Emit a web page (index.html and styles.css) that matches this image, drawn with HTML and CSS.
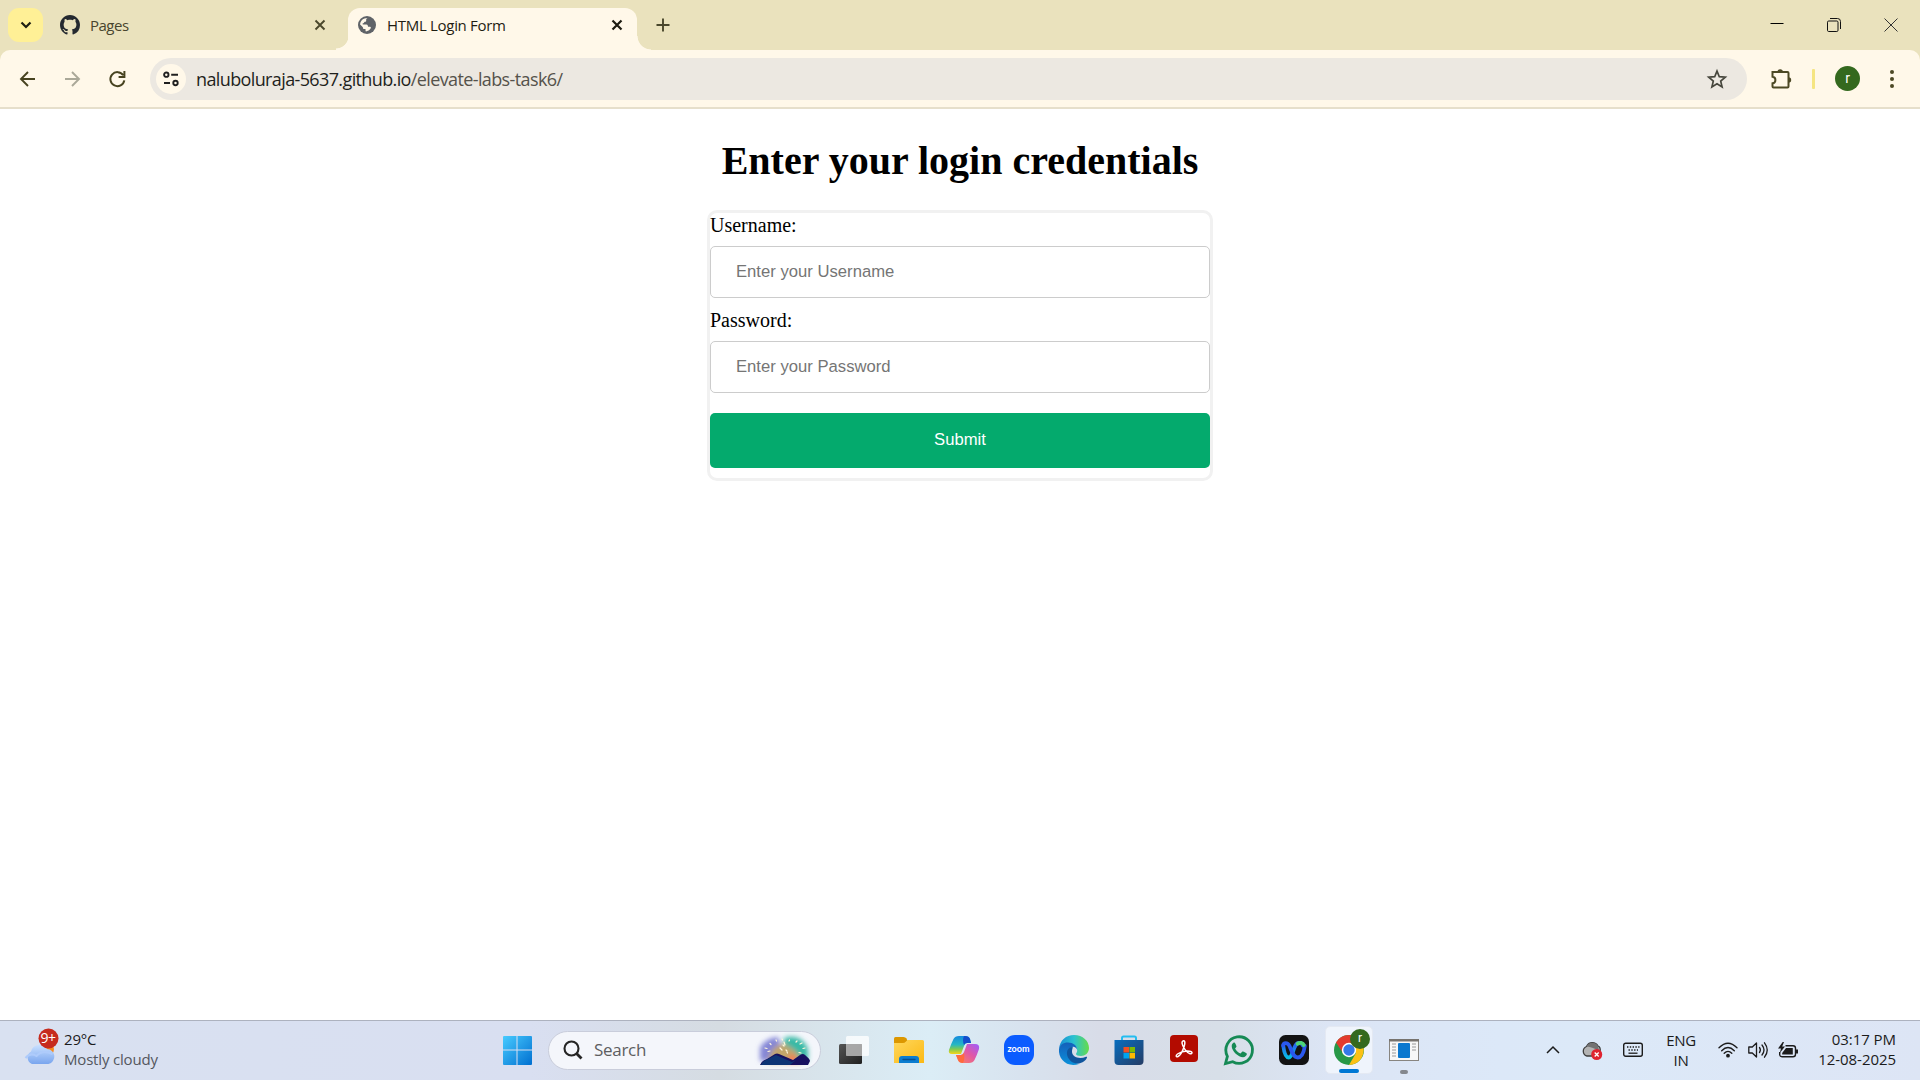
FILE: index.html
```html
<!DOCTYPE html>
<html lang="en">
<head>
<meta charset="utf-8">
<title>HTML Login Form</title>
<link rel="stylesheet" href="styles.css">
</head>
<body>
<div class="tabstrip">
  <div class="tab-search"><svg width="12" height="8" viewBox="0 0 12 8"><path d="M1.500 1.500 6 6l4.500-4.500" fill="none" stroke="#1f1f12" stroke-width="2.200"/></svg></div>
  <div class="tab">
    <svg width="20" height="20" viewBox="0 0 16 16"><path fill="#24292f" d="M8 0C3.580 0 0 3.580 0 8c0 3.540 2.290 6.530 5.470 7.590.4.070.55-.17.55-.38 0-.19-.01-.82-.01-1.490-2.010.37-2.530-.49-2.690-.94-.09-.23-.48-.94-.82-1.130-.28-.15-.68-.52-.01-.53.63-.01 1.080.58 1.230.82.72 1.210 1.870.87 2.330.66.070-.52.280-.87.510-1.070-1.780-.2-3.640-.89-3.640-3.950 0-.87.31-1.590.82-2.150-.08-.2-.36-1.020.08-2.120 0 0 .67-.21 2.200.82.64-.18 1.320-.27 2-.27s1.360.09 2 .27c1.530-1.040 2.200-.82 2.200-.82.44 1.100.16 1.920.08 2.120.51.56.82 1.270.82 2.150 0 3.070-1.870 3.750-3.650 3.950.29.25.54.73.54 1.480 0 1.070-.01 1.930-.01 2.200 0 .21.15.46.55.38A8.010 8.010 0 0 0 16 8c0-4.420-3.580-8-8-8z"/></svg>
    <span class="tab-title pages">Pages</span>
    <svg width="12" height="12" viewBox="0 0 12 12"><path d="m1.500 1.500 9 9m0-9-9 9" stroke="#4a472c" stroke-width="1.900"/></svg>
  </div>
  <div class="flare left"></div>
  <div class="tab active">
    <svg width="18" height="18" viewBox="0 0 18 18"><circle cx="9" cy="9" r="9" fill="#5f6368"/><path fill="#fff8e9" d="M9.500 2c-1 .8-1.600 1.300-1.300 2.400.2.900-.4 1.200-1.300 1.300-.9.100-.6 1.400-1.700 1.500-.8.100-.8.900-.2 1.300h3.400c1.500.1 1.600 1.500 1.600 2.300h2c1.200.1 1 1.300.4 2-1 1.400-2.300 2.300-4.500 2.600-.8-.7.100-1.900-.6-2.300H5.600c-.7-.300-.4-1.900-1.200-2.400L2.100 8.400C2.300 4.800 5.200 2 9.500 2z"/></svg>
    <span class="tab-title login">HTML Login Form</span>
    <svg width="12" height="12" viewBox="0 0 12 12"><path d="m1.500 1.500 9 9m0-9-9 9" stroke="#1d1b10" stroke-width="2.200"/></svg>
  </div>
  <div class="flare right"></div>
  <svg class="plus" width="14" height="14" viewBox="0 0 14 14"><path d="M7 .5v13M.5 7h13" stroke="#4a472c" stroke-width="1.900"/></svg>
  <div class="window-controls">
    <svg width="14" height="14" viewBox="0 0 14 14"><path d="M.5 5.500h13" stroke="#000"/></svg>
    <svg width="14" height="14" viewBox="0 0 14 14" fill="none" stroke="#111"><rect x=".5" y="3" width="10.500" height="10.500" rx="1.200"/><path d="M3 .5h7.500q3 0 3 3V11"/></svg>
    <svg width="14" height="14" viewBox="0 0 14 14"><path d="m.5.500 13 13m0-13-13 13" stroke="#333"/></svg>
  </div>
</div>
<div class="toolbar-wrap">
  <div class="toolbar">
    <div class="nav">
      <svg width="16" height="16" viewBox="0 0 16 16" fill="none" stroke="#47431f" stroke-width="1.900"><path d="M15 8H1.500M8 1 1 8l7 7"/></svg>
      <svg width="16" height="16" viewBox="0 0 16 16" fill="none" stroke="#aaa898" stroke-width="1.900"><path d="M0 8h14M7 1l7 7-7 7"/></svg>
      <svg width="16" height="16" viewBox="0 0 16 16" fill="none" stroke="#47431f" stroke-width="2"><path d="M13.200 4.200A7 7 0 1 0 14.300 9.300M14.400 0v5.900H8.600"/></svg>
    </div>
    <div class="omnibox">
      <div class="site-info"><svg width="16" height="16" viewBox="0 0 16 16" fill="none" stroke="#1f1f1f" stroke-width="1.900"><circle cx="3.300" cy="3.700" r="2.200"/><path d="M8.200 3.700H15M1 12h6"/><circle cx="12.500" cy="12" r="2.200"/></svg></div>
      <span class="url"><span class="host">naluboluraja-5637.github.io</span>/elevate-labs-task6/</span>
      <svg class="star" width="20" height="20" viewBox="0 0 20 20"><path d="m10 2.100 2.300 5.600 6 .5-4.600 3.900 1.400 5.900-5.100-3.200L4.900 18l1.400-5.900-4.600-3.900 6-.5z" fill="none" stroke="#46463c" stroke-width="1.700"/></svg>
    </div>
    <svg class="ext" width="22" height="22" viewBox="0 0 22 22"><path d="M2.500 4h15q1 0 1 1v13.500q0 1-1 1h-14q-1 0-1-1v-3.200q2.900-.3 2.900-3.300T2.500 8.700z" fill="none" stroke="#4c4925" stroke-width="2"/><path d="M7.500 4a2.700 2.700 0 0 1 5.400 0zM18.500 9.200a2.700 2.700 0 0 1 0 5.400z" fill="#4c4925"/></svg>
    <div class="divider"></div>
    <div class="avatar">r</div>
    <svg class="dots" width="4" height="18" viewBox="0 0 4 18" fill="#4c4925"><circle cx="2" cy="2" r="2"/><circle cx="2" cy="9" r="2"/><circle cx="2" cy="16" r="2"/></svg>
  </div>
</div>
<main class="page">
  <h1>Enter your login credentials</h1>
  <form class="login-form">
    <label for="user">Username:</label>
    <input id="user" type="text" placeholder="Enter your Username">
    <label for="pass">Password:</label>
    <input id="pass" type="password" placeholder="Enter your Password">
    <button type="button">Submit</button>
  </form>
</main>
<footer class="taskbar">
  <div class="weather">
    <div class="weather-icon">
      <svg width="36" height="40" viewBox="0 0 36 40"><defs><linearGradient id="cl" x2="0" y2="1"><stop stop-color="#c9e0ff"/><stop offset="1" stop-color="#79a5ee"/></linearGradient></defs><circle cx="23" cy="20" r="7" fill="#f78b1e"/><path d="M8 35a7 7 0 0 1-1-12.500A8.800 8.800 0 0 1 23 20a7.600 7.600 0 0 1 1.500 15z" fill="url(#cl)"/><path d="M1.500 29q5-6 11-2 6-7 16-2" fill="none" stroke="#aecbfb" stroke-width="2"/><circle cx="24.500" cy="9.500" r="10" fill="#c62b1e"/></svg>
      <span class="badge">9+</span>
    </div>
    <div class="weather-text"><span class="temp">29°C</span><span class="sky">Mostly cloudy</span></div>
  </div>
  <svg class="start" width="30" height="30" viewBox="0 0 30 30"><defs><linearGradient id="wn" x2="1" y2="1"><stop stop-color="#48cbff"/><stop offset="1" stop-color="#006fd0"/></linearGradient></defs><path fill="url(#wn)" d="M2 1h12.500v13.500H1V2Q1 1 2 1zM15.500 1H29q1 0 1 1v12.500H15.500zM1 15.500h13.500V30H2q-1 0-1-1zM15.500 15.500H30V29q0 1-1 1H15.500z"/></svg>
  <div class="search">
    <svg width="20" height="20" viewBox="0 0 20 20" fill="none" stroke="#252525" stroke-width="2.100"><circle cx="8.500" cy="8.500" r="7"/><path d="m13.500 13.500 5 5" stroke-width="2.800"/></svg>
    <span>Search</span>
    <svg class="scene" width="54" height="34" viewBox="0 0 54 34"><defs><filter id="soft" x="-30%" y="-30%" width="160%" height="160%"><feGaussianBlur stdDeviation="2.400"/></filter></defs><g filter="url(#soft)"><path d="M2 28V15Q7 5 20 4l8 24z" fill="#8486d6"/><path d="M26 27V5q17-5 24 11v12z" fill="#38b9a6"/><path d="M10 30q2-17 15-19 15 5 20 19z" fill="#c3a66a"/><path d="M29 30l5-10 6 10z" fill="#ff7150"/></g><g stroke="#fff6dc" stroke-width="1.200" stroke-linecap="round"><path d="m18 7 .5 1M24 6l.5 1m7 0-.5 1m8 0-1 1m6 1-2 1m5 4-2 .5m-4 4 2 .5M7 15l2 .5m3-5 1 1m-3 7 2-.5m13-6 1 1m-4 2 1 1m5 1 1 1m-3-9 1 3m-4 4 1 1m5 2 .5 1"/></g><path d="M2 32q1-4 7-6l8-5q2-1 4 0l14 6 7-5q3-2 5 0 5 4 5 6l-2 4z" fill="#17105f"/><path d="M3 32q1-4 7-6l8-4 16 7 4-2-6 5z" fill="#0d3475"/></svg>
  </div>
  <div class="apps">
    <div class="app"><svg width="30" height="30" viewBox="0 0 30 30"><defs><linearGradient id="tv" x2="1" y2="1"><stop stop-color="#555"/><stop offset="1" stop-color="#202020"/></linearGradient></defs><rect y="9" width="23" height="20" rx="1.500" fill="url(#tv)"/><rect x="7" y="1" width="23" height="20" rx="1.500" fill="#fff" opacity=".77"/><path d="M7 9h16v12H7z" fill="#949494" opacity=".7"/></svg></div>
    <div class="app"><svg width="30" height="30" viewBox="0 0 30 30"><defs><linearGradient id="fo" x2="1" y2="1"><stop stop-color="#ffd75c"/><stop offset="1" stop-color="#fbb914"/></linearGradient></defs><path d="M0 8V3.500Q0 2 1.500 2h8q2 0 3 1.500L13.500 6l-3 3z" fill="#dc9700"/><path d="M0 8h9q1.500 0 3-1.500L13.500 5H28.500q1.500 0 1.500 1.500V28H0z" fill="url(#fo)"/><path d="M5 28v-4q0-3 3-3h14q3 0 3 3v4z" fill="#0c7dd0"/><path d="M9 24.500h12" stroke="#074f91" stroke-width="1.300" stroke-linecap="round"/></svg></div>
    <div class="app"><svg width="30" height="30" viewBox="0 0 30 30"><defs><linearGradient id="c1" x2="0" y2="1"><stop stop-color="#158ade"/><stop offset=".48" stop-color="#25b7c4"/><stop offset=".72" stop-color="#79c957"/><stop offset="1" stop-color="#f5d517"/></linearGradient><linearGradient id="c2" x1="1" x2="0" y2="1"><stop stop-color="#9c5cff"/><stop offset=".45" stop-color="#e058a6"/><stop offset="1" stop-color="#ff8757"/></linearGradient></defs><path d="M16 1q4 0 5 3l1 4h-4q-2 0-3 3l-3 8H3Q-1 19 0 15q2-6 4.500-11Q6 1 10 1z" fill="url(#c1)"/><path d="M15 1h1q4 0 5 3l1 4h-4q-2 0-3 2-2-5 0-9z" fill="#144dcc"/><path d="M14 28q-4 0-5-3l-2-5h5q2 0 3-3l3-8h8q5 0 4 5-2 6-4.500 11Q24 28 20 28z" fill="url(#c2)"/><path d="M14 28q-4 0-5-3l-2-5h5q2 0 3-2 1 6-1 10z" fill="#ff6a3d"/></svg></div>
    <div class="app zoom-app"><span>zoom</span></div>
    <div class="app"><svg width="30" height="30" viewBox="0 0 30 30"><defs><linearGradient id="e1" x2="1"><stop stop-color="#188dd5"/><stop offset=".5" stop-color="#2bc2d0"/><stop offset="1" stop-color="#65dc49"/></linearGradient><linearGradient id="e2" x2="0" y2="1"><stop stop-color="#155fba"/><stop offset="1" stop-color="#0b91da"/></linearGradient></defs><path d="M0 14C1 5 7 0 15 0c9 0 15 6 15 13 0 5-4 8-8 8-3 0-5-1-5-2 0-.8 1.200-1.300 1.200-3.500C18 11 14 9 9 9c-5 0-8 2-9 5z" fill="url(#e1)"/><path d="M0 14c1-4 4-6.500 9-6.500 5 0 9 3 9 7-1-2-3-3-4.500-2.500C9 13 8 18 10 22c2 4 6 6 10 7C8 33-1 24 0 14z" fill="url(#e2)"/><path d="M12 12c-5 2-5 8-2 12 4 6 11 5 14 3 2-1 3.500-3 4-4.500.3-.8-.3-1-1-.7-7 3-14 0-14-5 0-2 .5-3.500 1-4.500z" fill="#10559d"/></svg></div>
    <div class="app"><svg width="30" height="30" viewBox="0 0 30 30"><defs><linearGradient id="ms" x2="1" y2="1"><stop stop-color="#086ebf"/><stop offset="1" stop-color="#253c65"/></linearGradient></defs><path d="M8 7V3q0-1.500 1.500-1.500h11Q22 1.500 22 3v4" fill="none" stroke="#24bdf0" stroke-width="2"/><path d="M.5 5h29v21q0 4-4 4h-21q-4 0-4-4z" fill="url(#ms)"/><path d="M9.500 12H15v5.500H9.500z" fill="#f25022"/><path d="M15.500 12H21v5.500h-5.500z" fill="#7fba00"/><path d="M9.500 18H15v5.500H9.500z" fill="#00a4ef"/><path d="M15.500 18H21v5.500h-5.500z" fill="#ffb900"/></svg></div>
    <div class="app"><svg width="30" height="30" viewBox="0 0 30 30"><rect x="1" width="28" height="27" rx="4" fill="#b30b00"/><path d="M14 6c2-1 2.500 2 1 6-1.400 4-4 8.500-6 9.500s-2.600-1-.5-2.500c3-2 8-3.200 12-2.800 3.500.3 3 3 .5 2.500C18 18 13.500 12 13 8c0-1 .3-1.700 1-2z" fill="none" stroke="#fff" stroke-width="1.500"/></svg></div>
    <div class="app"><svg width="30" height="30" viewBox="0 0 30 30"><path d="M1.500 28.500 3.400 21.300A13.300 13.300 0 1 1 8.700 26.700z" fill="none" stroke="#168a55" stroke-width="2.800"/><path d="M10.500 7.500c-1-.5-3 1.500-2.800 3.700.2 5 6.800 11 11.300 11 2 0 4-2 3.900-3.500-.1-.7-4-2.600-4.500-2.200l-1.900 2.100c-2-.7-4.600-3-5.400-5.100l1.400-1.700c.2-.7-1.300-4.100-2-4.300z" fill="#168a55"/></svg></div>
    <div class="app"><svg width="30" height="30" viewBox="0 0 30 30"><defs><linearGradient id="w1" x2="0" y2="1"><stop stop-color="#2c57f0"/><stop offset="1" stop-color="#08bde4"/></linearGradient></defs><rect width="30" height="30" rx="6.500" fill="#131313"/><g fill="none" stroke-width="3.800" stroke-linecap="round"><path d="M4.200 10.500C5 17 6.500 22.500 9.800 22.500c4.500 0 4.500-14.500 10-14.500 2.500 0 3.700 1 4 2.500" stroke="url(#w1)"/><path d="M4.200 10.500C4.500 7.500 8.500 7 10.500 11c1.800 4 3.700 11.500 8.200 11.500 4 0 6.300-6 7.100-11.500" stroke="#2a58ee"/><path d="M18.500 8.800c2-1.700 5.500-1 6.300 1.200" stroke="#4ed476"/></g></svg></div>
    <div class="app running"><svg width="30" height="30" viewBox="0 0 30 30"><circle cx="15" cy="15" r="15" fill="#279847"/><path d="M15 15 2 7.500A15 15 0 0 1 28 7.500L15 8z" fill="#e33b2e"/><path d="M2 7.500 9 18l6-3V7z" fill="#e33b2e"/><path d="M15 8h13A15 15 0 0 1 15 30l7-12z" fill="#fbc116"/><circle cx="15" cy="15" r="7.200" fill="#fff"/><circle cx="15" cy="15" r="5.700" fill="#3479e8"/></svg><span class="profile">r</span></div>
    <div class="app idle"><svg width="30" height="30" viewBox="0 0 30 30"><rect x=".5" y="4.500" width="29" height="21" fill="#f7f7f7" stroke="#888580"/><path d="M0 4h30v2.500H0z" fill="#77736e"/><rect x="9" y="8" width="12" height="15" rx="1" fill="#0b78cf"/><path d="M3 9h4m-4 3h4m-4 3h4m-4 3h4m-4 3h4M23 9h4m-4 3h4m-4 3h4" stroke="#999" stroke-width="1.200"/></svg></div>
  </div>
  <div class="tray">
    <svg class="chev" width="14" height="8" viewBox="0 0 14 8"><path d="m1 7 6-6 6 6" fill="none" stroke="#1c1c1c" stroke-width="1.500"/></svg>
    <svg class="cloud" width="22" height="20" viewBox="0 0 22 20"><path d="M6 16a5 5 0 0 1-.5-9.500A6.500 6.500 0 0 1 17 6q3 1 2 6l-5 4z" fill="#b3b3b3" stroke="#3d3d3d" stroke-width="1.300"/><path d="M5.500 6.500A6.500 6.500 0 0 1 17 6l1 5q-6-4-12.500-4.500z" fill="#737373"/><circle cx="15.700" cy="14.500" r="5.500" fill="#df2330"/><path d="m13.700 12.500 4 4m0-4-4 4" stroke="#fff" stroke-width="1.300"/></svg>
    <svg class="keyb" width="20" height="16" viewBox="0 0 20 16" fill="none" stroke="#1c1c1c"><rect x=".7" y="1.200" width="18.600" height="13.100" rx="2" stroke-width="1.400"/><path d="M4 5h12.500M5.500 8h9.500" stroke-width="1.500" stroke-dasharray="1.400 1.400"/><path d="M5.500 11.200h9" stroke-width="1.300"/></svg>
    <div class="lang"><span>ENG</span><span>IN</span></div>
    <svg class="wifi" width="20" height="16" viewBox="0 0 20 16" fill="none" stroke="#1c1c1c" stroke-width="1.400" stroke-linecap="round"><path d="M1 5.700q9-9 18 0M3.700 8.700q6.300-6.300 12.600 0M6.200 11.300q3.800-3.800 7.600 0"/><circle cx="10" cy="13.700" r="1.200" fill="#1c1c1c"/></svg>
    <svg class="sound" width="20" height="18" viewBox="0 0 20 18" fill="none" stroke="#1c1c1c" stroke-width="1.300" stroke-linecap="round"><path d="M.8 6h3.500L8.500 2v14l-4.200-4H.8z" stroke-linejoin="round"/><path d="M11.500 6.500q1.800 2.500 0 5M14 4q4 5 0 10M16.500 1.800q5.500 7.200 0 14.400"/></svg>
    <svg class="battery" width="20" height="16" viewBox="0 0 20 16"><path d="M7.500 3.700H15q2.500 0 2.500 2.500v6q0 2.500-2.500 2.500H4Q2 14.700 1.700 13v-3" fill="none" stroke="#1c1c1c" stroke-width="1.400"/><path d="M8 6h6.800v6.500H4.200V11zM18 7.500h2v4h-2zM4.700 0 0 6.500h3L1.800 11 7 4.500H4.200L6 0z" fill="#1c1c1c"/></svg>
    <div class="clock"><span class="time">03:17 PM</span><span class="date">12-08-2025</span></div>
  </div>
</footer>
</body>
</html>
```
FILE: styles.css
```css
* { box-sizing: border-box; }
body {
  margin: 0;
  width: 1920px;
  height: 1080px;
  overflow: hidden;
  display: flex;
  flex-direction: column;
  background: #fff;
  font-family: "Open Sans", "Noto Sans", sans-serif;
}
svg { display: block; flex: none; overflow: visible; }

/* Tab strip */
.tabstrip { height: 50px; display: flex; align-items: center; padding-left: 8px; background: #eae2bd; flex: none; }
.tab-search { width: 35px; height: 34px; border-radius: 11px; background: #fff096; display: flex; align-items: center; justify-content: center; }
.tab { width: 293px; height: 34px; display: flex; align-items: center; padding: 0 10px 0 17px; }
.tab-title { flex: 1; white-space: nowrap; font-size: 15px; line-height: 20px; color: #48452e; }
.pages { margin-left: 10px; letter-spacing: -.5px; }
.login { margin-left: 11px; letter-spacing: -.3px; color: #1f1d12; }
.tab.active { width: 289px; height: 42px; align-self: flex-end; padding: 0 14px 8px 10px; border-radius: 12px 12px 0 0; background: #fff8e9; }
.flare { width: 14px; height: 14px; align-self: flex-end; }
.flare.left { width: 12px; background: radial-gradient(circle at 0 0, transparent 12px, #fff8e9 12.800px); }
.flare.right { background: radial-gradient(circle at 100% 0, transparent 13px, #fff8e9 13.800px); }
.plus { margin-left: 5px; }
.window-controls { margin-left: auto; display: flex; gap: 43px; padding-right: 22px; }

/* Toolbar */
.toolbar-wrap { background: #eae2bd; flex: none; }
.toolbar { height: 59px; display: flex; align-items: center; padding-left: 20px; background: #fff8e9; border-bottom: 2px solid #e6dfcb; border-radius: 10px 10px 0 0; }
.nav { display: flex; width: 130px; gap: 29px; }
.omnibox { width: 1597px; height: 42px; border-radius: 21px; background: #ece8e1; display: flex; align-items: center; padding: 0 20px 0 6px; }
.site-info { width: 30px; height: 30px; border-radius: 50%; background: #fff8e9; display: flex; align-items: center; justify-content: center; }
.url { flex: 1; margin-left: 10px; font-size: 18px; line-height: 24px; letter-spacing: -.62px; color: #55524b; white-space: nowrap; }
.host { color: #1f1f1c; }
.ext { margin-left: 23px; }
.divider { width: 3px; height: 20px; margin-left: 20px; background: #f5e582; border-radius: 1px; }
.avatar { width: 25px; height: 25px; margin-left: 20px; border-radius: 50%; background: #34691e; color: #fff; font: 14px/24px Roboto, sans-serif; text-align: center; }
.dots { margin-left: 30px; }

/* Web page */
.page { flex: 1; padding-top: 29px; font-family: "Liberation Serif", "Times New Roman", serif; color: #000; }
h1 { margin: 0 0 26px; font-size: 40px; line-height: 46px; text-align: center; }
.login-form { width: 506px; margin: 0 auto; border: 3px solid #f1f1f1; border-radius: 10px; }
.login-form label { display: block; height: 23px; font-size: 20px; line-height: 25px; }
.login-form input { display: block; width: 100%; height: 52px; margin: 10px 0; padding: 0 25px; border: 1px solid #ccc; border-radius: 5px; background: #fff; font: 16.670px "Liberation Sans", Arial, sans-serif; }
.login-form input::placeholder { color: #757575; }
.login-form button { display: block; width: 100%; height: 55px; margin: 20px 0 10px; padding: 0 0 2px; border: 0; border-radius: 5px; background: #04aa6d; color: #fff; font: 16.670px "Liberation Sans", Arial, sans-serif; }

/* Taskbar */
.taskbar { height: 60px; flex: none; display: flex; align-items: center; padding-bottom: 1px; border-top: 1px solid #adb2bf; background: linear-gradient(90deg, #d9e1f1 0, #d9dff1 530px, #d5dce2 720px, #dbedf6 930px, #d8e3ef 1020px, #d8dce8 1100px, #d7dfe8 1220px, #dce5f5 1330px, #dce8f8 1500px, #dce9f8 1580px, #dde5f5 1920px); color: #1b1b1b; }
.weather { width: 502px; padding: 0 0 3px 24px; display: flex; }
.weather-icon { position: relative; width: 40px; }
.badge { position: absolute; left: 14px; top: 0; width: 20px; color: #fff; font-size: 14px; line-height: 18px; letter-spacing: -.5px; text-align: center; }
.weather-text { display: flex; flex-direction: column; font-size: 15px; line-height: 20px; letter-spacing: -.18px; }
.sky { color: #54575e; }
.search { width: 273px; height: 39px; margin-left: 16px; padding: 0 8px 0 14px; display: flex; align-items: center; border-radius: 20px; border: 1px solid #c9cddb; background: #f4f6fb; }
.search span { flex: 1; margin-left: 11px; font-size: 17px; line-height: 24px; letter-spacing: -.3px; color: #5d5e61; }
.apps { display: flex; margin-left: 5px; }
.app { width: 55px; height: 48px; display: flex; align-items: center; justify-content: center; position: relative; }
.zoom-app span { width: 30px; height: 30px; border-radius: 11px; background: #0b5cff; color: #fff; font: bold 9px/27px Lato, sans-serif; text-align: center; }
.running { width: 48px; margin: 0 3px 0 4px; background: #eff4fc; border: 1px solid #e4e9f3; border-radius: 5px; }
.profile { position: absolute; left: 24px; top: 2px; width: 20px; height: 20px; border-radius: 50%; background: #34691e; color: #fff; font: 12px/19px Roboto, sans-serif; text-align: center; }
.running::after, .idle::after { content: ""; position: absolute; bottom: 0; width: 20px; height: 4px; border-radius: 2px; background: #0078d4; }
.idle::after { width: 8px; background: #85888e; }
.tray { margin-left: auto; display: flex; align-items: center; padding-right: 24px; font-size: 15px; line-height: 20px; letter-spacing: -.3px; }
.cloud { margin-left: 21px; }
.keyb { margin-left: 20px; }
.lang { width: 36px; margin-left: 20px; display: flex; flex-direction: column; align-items: center; }
.wifi { margin-left: 19px; }
.sound { margin-left: 10px; }
.battery { margin-left: 10px; }
.clock { width: 87px; margin-left: 11px; padding-bottom: 2px; display: flex; flex-direction: column; align-items: flex-end; letter-spacing: -.05px; }
.clock span { white-space: nowrap; }
```
